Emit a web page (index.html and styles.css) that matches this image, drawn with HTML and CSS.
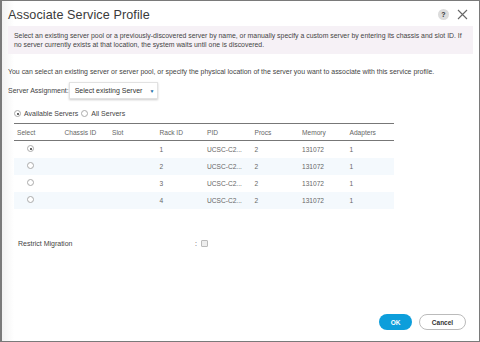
FILE: index.html
```html
<!DOCTYPE html>
<html>
<head>
	<title>Associate Service Profile</title>
	<link rel="stylesheet" href="styles.css">
</head>
<body>
	<div class="dialog">
		<div class="header">
			<h1>Associate Service Profile</h1>
			<div class="tools">
				<span class="help">?</span>
				<svg class="close" width="11" height="11" viewBox="0 0 11 11">
					<path d="M1 1 L10 10 M10 1 L1 10" stroke="#666" stroke-width="1.1" fill="none"/>
				</svg>
			</div>
		</div>

		<div class="info">
			Select an existing server pool or a previously-discovered server by name, or manually specify a custom server by entering its chassis and slot ID. If<br>
			no server currently exists at that location, the system waits until one is discovered.
		</div>

		<p class="lead">You can select an existing server or server pool, or specify the physical location of the server you want to associate with this service profile.</p>

		<div class="assign">
			<span>Server Assignment:</span>
			<div class="select">Select existing Server <span class="caret">&#9660;</span></div>
		</div>

		<div class="filter">
			<span class="radio on"></span> Available Servers
			<span class="radio"></span> All Servers
		</div>

		<table class="servers">
			<thead>
				<tr>
					<th>Select</th><th>Chassis ID</th><th>Slot</th><th>Rack ID</th>
					<th>PID</th><th>Procs</th><th>Memory</th><th>Adapters</th>
				</tr>
			</thead>
			<tbody>
				<tr><td><span class="radio on"></span></td><td></td><td></td><td>1</td><td>UCSC-C2...</td><td>2</td><td>131072</td><td>1</td></tr>
				<tr><td><span class="radio"></span></td><td></td><td></td><td>2</td><td>UCSC-C2...</td><td>2</td><td>131072</td><td>1</td></tr>
				<tr><td><span class="radio"></span></td><td></td><td></td><td>3</td><td>UCSC-C2...</td><td>2</td><td>131072</td><td>1</td></tr>
				<tr><td><span class="radio"></span></td><td></td><td></td><td>4</td><td>UCSC-C2...</td><td>2</td><td>131072</td><td>1</td></tr>
			</tbody>
		</table>

		<div class="restrict">
			<span class="label">Restrict Migration</span>
			<span class="colon">:</span>
			<span class="check"></span>
		</div>

		<div class="footer">
			<button class="ok">OK</button>
			<button class="cancel">Cancel</button>
		</div>
	</div>
</body>
</html>
```

FILE: styles.css
```css
* {
	margin: 0;
	padding: 0;
	box-sizing: border-box;
	font-family: "Liberation Sans", Arial, sans-serif;
}

body {
	background: #fff;
}

.dialog {
	width: 480px;
	height: 342px;
	border: 1px solid #7a7a7a;
	border-left-width: 2px;
	display: flex;
	flex-direction: column;
	background: linear-gradient(to right, #f2f2f2, #fff 12px);
	color: #444;
	font-size: 7px;
}

.header {
	display: flex;
	justify-content: space-between;
	align-items: center;
	padding: 3px 11px 0 6px;
	height: 24px;
}

.header h1 {
	font-size: 12.6px;
	font-weight: normal;
	color: #3a3a3a;
	letter-spacing: 0.1px;
}

.tools {
	display: flex;
	align-items: center;
	gap: 8px;
}

.help {
	width: 11px;
	height: 11px;
	border-radius: 50%;
	background: #dcdcdc;
	color: #333;
	font-size: 7px;
	font-weight: bold;
	display: flex;
	align-items: center;
	justify-content: center;
}

.info {
	margin: 1px 6px 0 6px;
	background: #f6f1f6;
	padding: 5px 6px;
	line-height: 9px;
	font-size: 6.9px;
	color: #444;
	white-space: nowrap;
}

.lead {
	margin: 14px 0 0 6px;
	font-size: 6.95px;
}

.assign {
	display: flex;
	align-items: center;
	margin: 7px 0 0 6px;
}

.select {
	margin-left: 0;
	width: 89px;
	height: 17px;
	border: 1px solid #e2e2e2;
	box-shadow: 0 1px 2px #ccc;
	display: flex;
	align-items: center;
	padding-left: 5px;
	gap: 7px;
	color: #333;
}

.caret {
	font-size: 5px;
	color: #1e6fa8;
}

.filter {
	display: flex;
	align-items: center;
	gap: 3px;
	margin: 11px 0 0 12px;
}

.radio {
	display: inline-block;
	width: 7px;
	height: 7px;
	border: 1px solid #aaa;
	border-radius: 50%;
	background: #fff;
	position: relative;
}

.radio.on::after {
	content: "";
	position: absolute;
	left: 1.5px;
	top: 1.5px;
	width: 2px;
	height: 2px;
	border-radius: 50%;
	background: #333;
}

.servers {
	margin: 6px 0 0 12px;
	width: 380px;
	border-collapse: collapse;
	border-top: 1px solid #777;
	table-layout: fixed;
	font-size: 6.6px;
}

.servers th {
	text-align: left;
	font-weight: normal;
	color: #666;
	height: 17px;
	padding-left: 3px;
	border-bottom: 1px solid #777;
}

.servers td {
	height: 17px;
	padding-left: 3px;
	color: #666;
}

.servers td:first-child {
	padding-left: 13px;
}

.servers tbody tr:nth-child(even) {
	background: #f4f9fd;
}

.restrict {
	display: flex;
	align-items: center;
	margin: 31px 0 0 16px;
}

.restrict .label {
	width: 177px;
}

.colon {
	margin-right: 4px;
}

.check {
	width: 7px;
	height: 7px;
	border: 1px solid #bbb;
	background: #eee;
	border-radius: 1px;
}

.footer {
	margin-top: auto;
	display: flex;
	justify-content: flex-end;
	gap: 7px;
	padding: 0 13px 11px 0;
}

.footer button {
	height: 16px;
	border-radius: 8px;
	font-size: 6.5px;
	font-weight: bold;
}

.ok {
	width: 33px;
	background: #0d9edb;
	border: none;
	color: #fff;
}

.cancel {
	width: 47px;
	background: #fff;
	border: 1px solid #bbb;
	color: #333;
}
```
